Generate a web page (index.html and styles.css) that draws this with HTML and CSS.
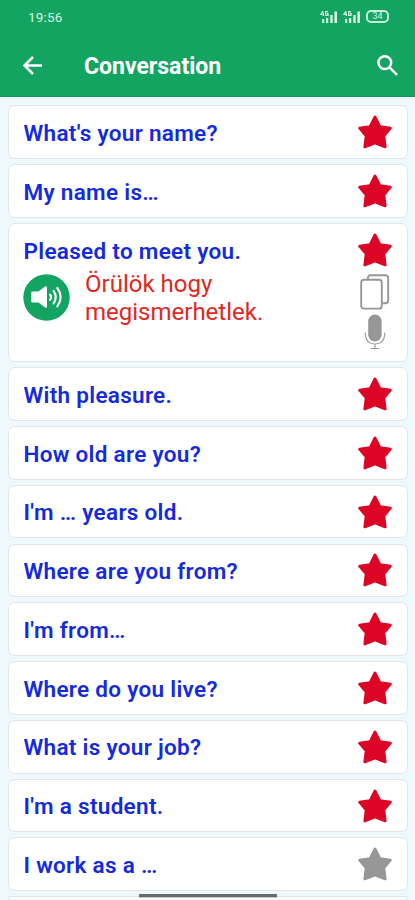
FILE: index.html
```html
<!DOCTYPE html>
<html lang="en">
<head>
  <meta charset="UTF-8" />
  <meta name="viewport" content="width=device-width, initial-scale=1.0"/>
  <title>Conversation</title>
  <link rel="stylesheet" href="styles.css">
</head>
<body>
  <!-- shared icons -->
  <svg class="sprite" width="0" height="0">
    <symbol id="star" viewBox="0 0 34 34">
      <path d="M17 2 L21.9 11.6 L32.4 13.2 L25.9 20.8 L27.2 31.9 L17 28 L6.8 31.9 L8.1 20.8 L1.6 13.2 L12.1 11.6 Z" fill="currentColor" stroke="currentColor" stroke-width="2.8" stroke-linejoin="round"/>
    </symbol>
    <symbol id="signal" viewBox="0 0 18 14">
      <path d="M3 1 L0.8 4.5 H4 M3.3 2.5 V6 M8 1.7 H5.7 V5.3 H8 V3.6 H7" fill="none" stroke="currentColor" stroke-width="1.2"/>
      <path d="M2.2 9h2v4h-2z M6 8h2.2v5h-2.2z M10.3 5h2.4v8h-2.4z M14.4 1.5h2.6v11.5h-2.6z" fill="currentColor"/>
    </symbol>
  </svg>

  <header class="header">
    <div class="status">
      <span class="time">19:56</span>
      <div class="status-icons">
        <svg width="18" height="14"><use href="#signal"/></svg>
        <svg width="18" height="14"><use href="#signal"/></svg>
        <div class="battery">34</div>
      </div>
    </div>
    <div class="toolbar">
      <svg class="back" width="20" height="20" viewBox="0 0 20 20"><path d="M19 9.5H2 M10 1L1.5 9.5L10 18"/></svg>
      <h1>Conversation</h1>
      <svg class="search" width="22" height="22" viewBox="0 0 22 22"><circle cx="7.8" cy="7.6" r="6.4"/><path d="M12.5 12.3L20 19.8"/></svg>
    </div>
  </header>

  <main class="list">
    <div class="card"><span class="phrase">What's your name?</span><svg class="star"><use href="#star"/></svg></div>
    <div class="card"><span class="phrase">My name is…</span><svg class="star"><use href="#star"/></svg></div>
    <div class="card open">
      <div class="row"><span class="phrase">Pleased to meet you.</span><svg class="star"><use href="#star"/></svg></div>
      <div class="details">
        <svg class="speaker" width="47" height="47" viewBox="0 0 47 47">
          <circle cx="23.5" cy="23.5" r="23.2" fill="#14a462"/>
          <path d="M9 17.5 H15.5 L22 12.5 Q24 11.5 24 13.5 V32.5 Q24 34.5 22 33.5 L15.5 28.5 H9 Q8.3 28.5 8.3 27.5 V18.5 Q8.3 17.5 9 17.5 Z" fill="#fff"/>
          <path d="M27 20.5 Q29.2 23 27 25.8 M30.5 16.8 Q35 23 30.5 29.5 M34.3 14 Q41 23 34.3 32.3" fill="none" stroke="#fff" stroke-width="2.1" stroke-linecap="round"/>
        </svg>
        <p class="translation" lang="hu">Örülök hogy<br>megismerhetlek.</p>
        <div class="actions">
          <svg width="30" height="36" viewBox="0 0 30 36" fill="none" stroke="#979797" stroke-width="1.9">
            <path d="M8 5.8 V3.8 Q8 1.3 10.5 1.3 H25.5 Q28.2 1.3 28.2 4 V26.5 Q28.2 29.2 25.5 29.2 H22.5"/>
            <rect x="1.2" y="5.8" width="20.6" height="28.8" rx="2.7"/>
          </svg>
          <svg width="22" height="36" viewBox="0 0 22 36">
            <rect x="4.2" y="0.5" width="13.4" height="27" rx="6.7" fill="#979797"/>
            <path d="M1.2 18.5 V20 Q1.8 30 11 30 Q20.2 30 20.8 20 V18.5 M11 30 V34 M6.7 34.5 H15.3" fill="none" stroke="#979797" stroke-width="1.1"/>
          </svg>
        </div>
      </div>
    </div>
    <div class="card"><span class="phrase">With pleasure.</span><svg class="star"><use href="#star"/></svg></div>
    <div class="card"><span class="phrase">How old are you?</span><svg class="star"><use href="#star"/></svg></div>
    <div class="card"><span class="phrase">I'm … years old.</span><svg class="star"><use href="#star"/></svg></div>
    <div class="card"><span class="phrase">Where are you from?</span><svg class="star"><use href="#star"/></svg></div>
    <div class="card"><span class="phrase">I'm from…</span><svg class="star"><use href="#star"/></svg></div>
    <div class="card"><span class="phrase">Where do you live?</span><svg class="star"><use href="#star"/></svg></div>
    <div class="card"><span class="phrase">What is your job?</span><svg class="star"><use href="#star"/></svg></div>
    <div class="card"><span class="phrase">I'm a student.</span><svg class="star"><use href="#star"/></svg></div>
    <div class="card"><span class="phrase">I work as a …</span><svg class="star off"><use href="#star"/></svg></div>
    <div class="card next"></div>
  </main>
  <div class="home-bar"></div>
</body>
</html>
```
FILE: styles.css
```css
* {
  box-sizing: border-box;
}
body {
  margin: 0;
  height: 900px;
  overflow: hidden;
  background: #eff8fd;
  font-family: Roboto, "Liberation Sans", sans-serif;
}
svg {
  display: block;
  flex-shrink: 0;
}
.sprite {
  position: absolute;
}
.header {
  height: 97px;
  background: #14a462;
  border-bottom: 1px solid #0b9653;
  color: #fff;
}
.status {
  display: flex;
  justify-content: space-between;
  align-items: center;
  height: 33px;
  padding: 0 26px 0 28px;
  color: #d8f5e3;
}
.time {
  font-size: 13.5px;
  letter-spacing: 0.2px;
}
.status-icons {
  display: flex;
  align-items: center;
  gap: 5px;
}
.battery {
  width: 23px;
  height: 13px;
  border: 2px solid #c5efd6;
  border-radius: 5px;
  font-size: 9px;
  line-height: 9px;
  text-align: center;
}
.toolbar {
  display: flex;
  align-items: center;
  height: 65px;
  padding: 0 16px 0 23px;
}
.toolbar svg {
  fill: none;
  stroke: #fff;
  stroke-width: 2.5;
}
.toolbar h1 {
  flex: 1;
  margin: 0 0 0 41px;
  padding-top: 2px;
  font-size: 23px;
  font-weight: 700;
}
.list {
  display: flex;
  flex-direction: column;
  gap: 5.2px;
  height: 803px;
  overflow: hidden;
  padding: 8.2px 7.5px 0 8px;
}
.card {
  display: flex;
  flex-shrink: 0;
  align-items: center;
  justify-content: space-between;
  height: 53.6px;
  padding: 0 15px 0 14.5px;
  background: #fff;
  border: 1.5px solid #dfe7ea;
  border-radius: 7px;
}
.phrase {
  padding-top: 1.5px;
  color: #142ae0;
  font-size: 22.5px;
  font-weight: 600;
  letter-spacing: 0.3px;
}
.star {
  width: 34px;
  height: 34px;
  color: #dd0525;
}
.star.off {
  color: #979797;
}

/* expanded phrase */
.card.open {
  display: block;
  height: 139.3px;
}
.row {
  display: flex;
  align-items: center;
  justify-content: space-between;
  height: 52px;
}
.details {
  display: flex;
  align-items: flex-start;
  margin: -2px 0 0 -0.5px;
}
.translation {
  flex: 1;
  margin: -4px 0 0 15px;
  color: #e0281f;
  font-size: 24px;
  line-height: 28px;
}
.actions {
  display: flex;
  flex-direction: column;
  align-items: center;
  gap: 4px;
  width: 34px;
}

/* only the top edge shows above the screen bottom */
.card.next {
  height: 3px;
  border-bottom: 0;
  border-radius: 7px 7px 0 0;
}
.home-bar {
  position: absolute;
  left: 139px;
  top: 894px;
  width: 138px;
  height: 4px;
  background: #666a6c;
  border-bottom: 1px solid #c8cccf;
  border-radius: 1px;
}
```
